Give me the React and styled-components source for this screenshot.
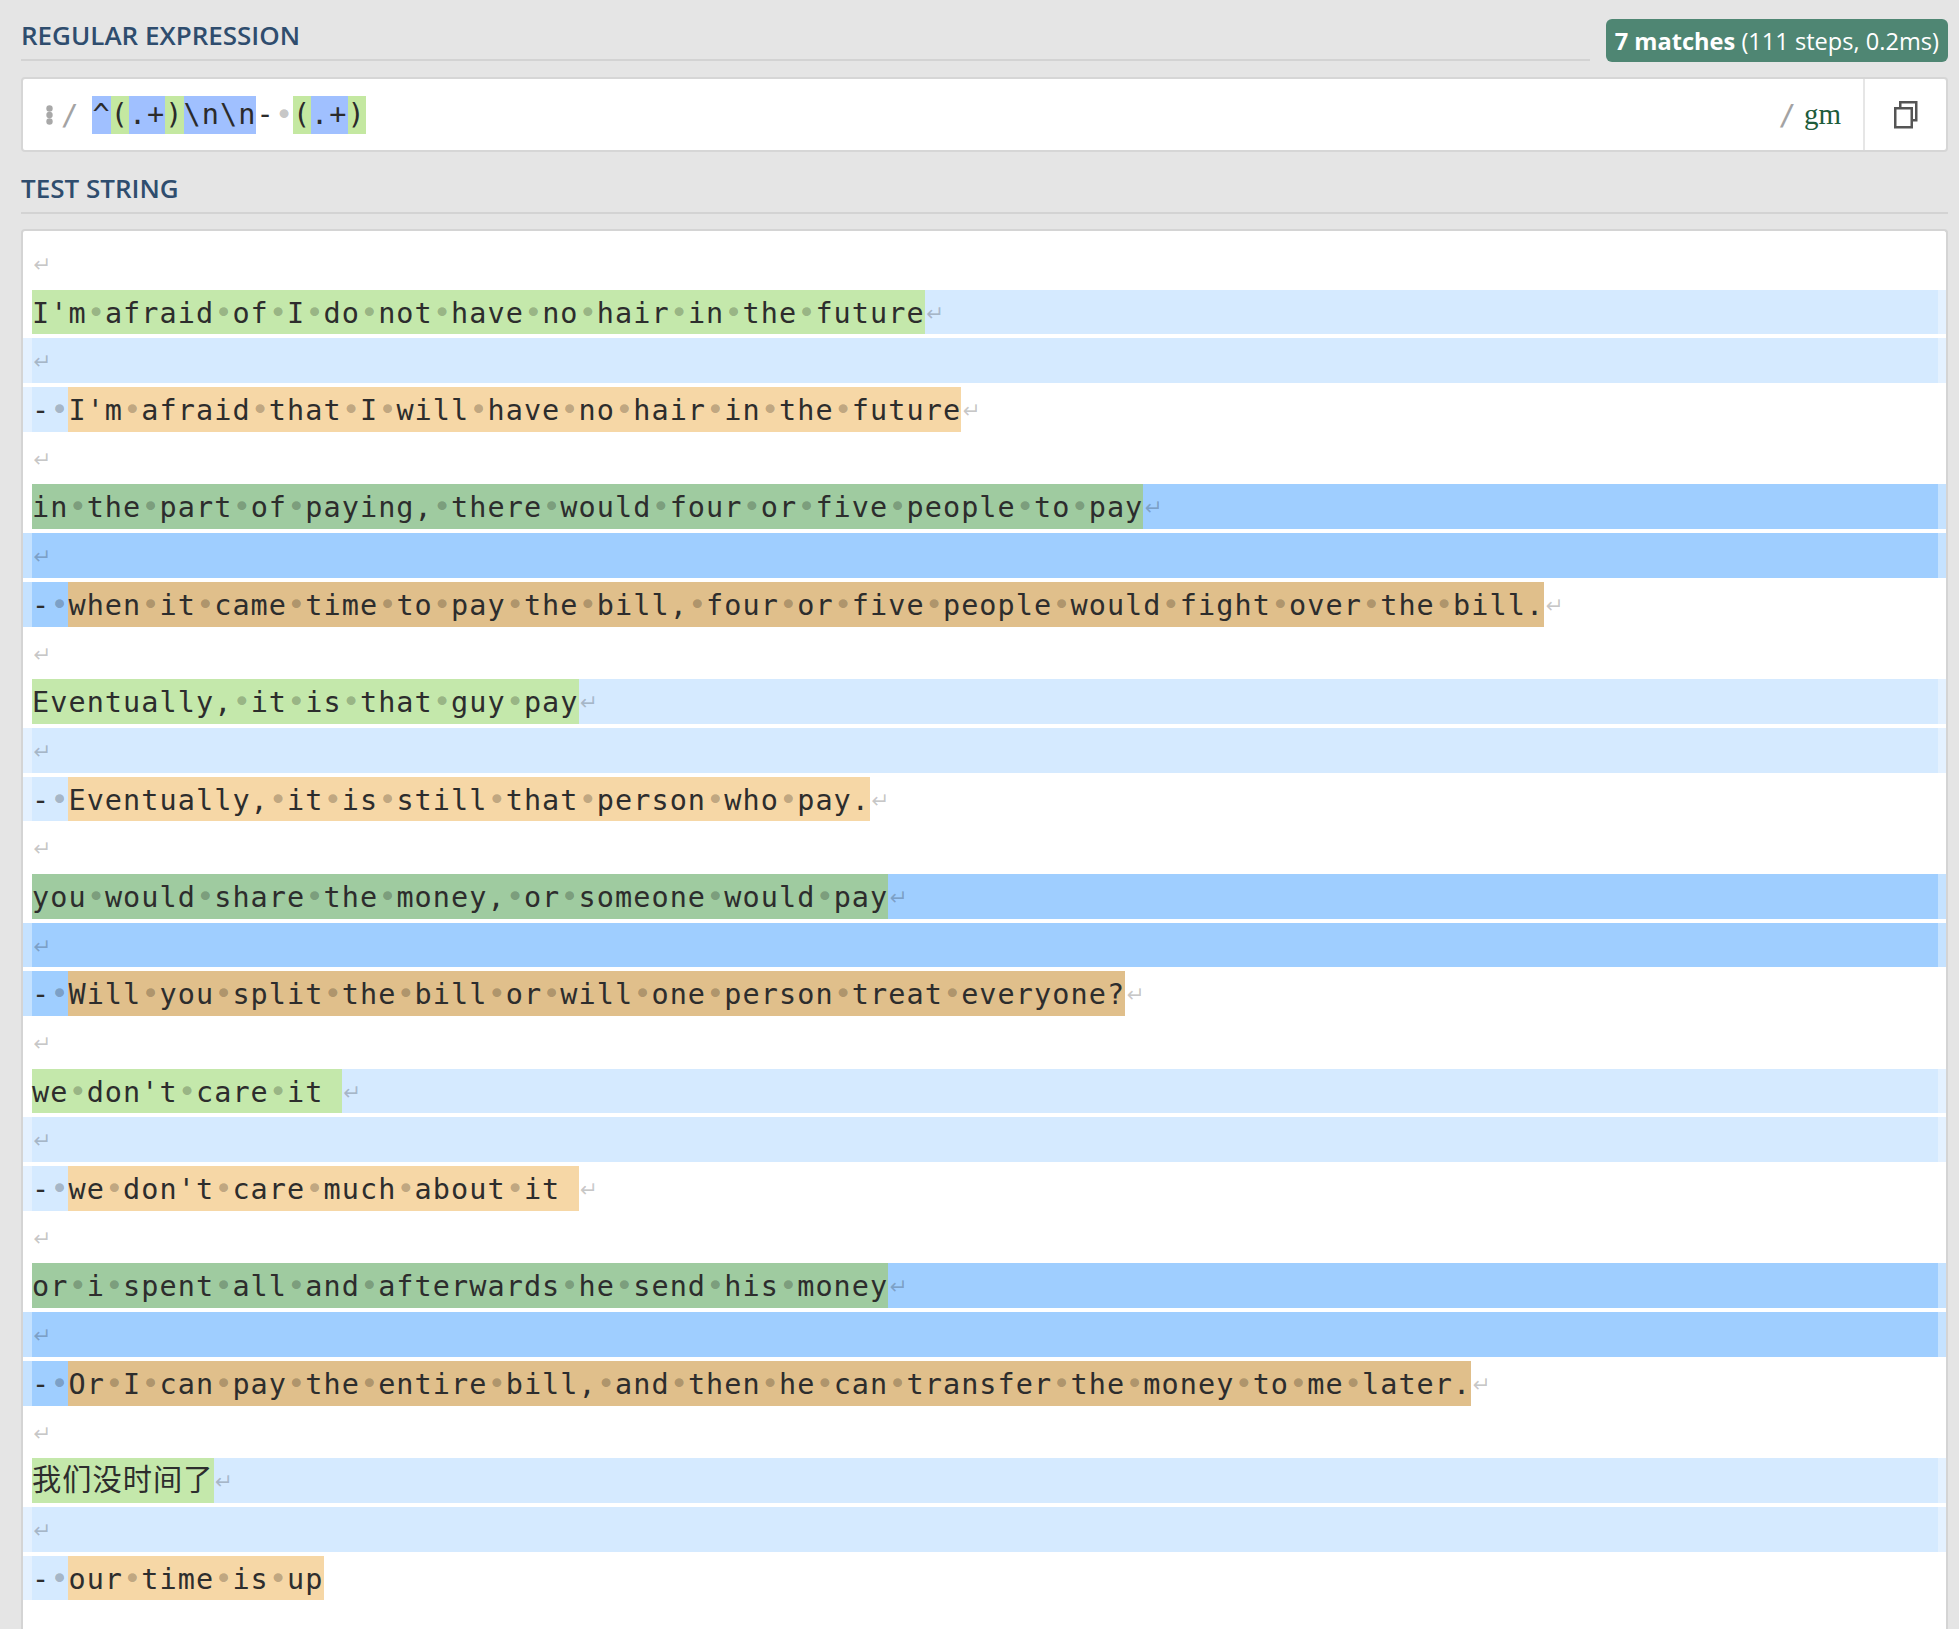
import React from 'react';
import styled, { createGlobalStyle } from 'styled-components';

const MONO = `'DejaVu Sans Mono', 'Noto Sans CJK SC', monospace`;
const SANS = `'Open Sans', 'Noto Sans', sans-serif`;
const LINE_H = 48.7;

const TONES = {
  light: { match: '#d5eaff', edge: '#e4f1ff', g1: '#c4e8ab', g2: '#f6d7a6' },
  dark: { match: '#9fceff', edge: '#c5e2ff', g1: '#9fcba0', g2: '#e0bf8b' },
};

const MATCHES = [
  ["I'm afraid of I do not have no hair in the future", "I'm afraid that I will have no hair in the future"],
  ['in the part of paying, there would four or five people to pay', 'when it came time to pay the bill, four or five people would fight over the bill.'],
  ['Eventually, it is that guy pay', 'Eventually, it is still that person who pay.'],
  ['you would share the money, or someone would pay', 'Will you split the bill or will one person treat everyone?'],
  ["we don't care it\u00a0", "we don't care much about it\u00a0"],
  ['or i spent all and afterwards he send his money', 'Or I can pay the entire bill, and then he can transfer the money to me later.'],
  ['我们没时间了', 'our time is up'],
];

const REGEX = [
  { t: '^', k: 'b' },
  { t: '(', k: 'g' },
  { t: '.+', k: 'b' },
  { t: ')', k: 'g' },
  { t: '\\n\\n', k: 'b' },
  { t: '-', k: '' },
  { t: ' ', k: '' },
  { t: '(', k: 'g' },
  { t: '.+', k: 'b' },
  { t: ')', k: 'g' },
];

// build the visible lines of the test string
const buildLines = () => {
  const lines = [{ segs: [], nl: true }];
  MATCHES.forEach(([a, b], i) => {
    const tone = i % 2 ? 'dark' : 'light';
    const last = i === MATCHES.length - 1;
    lines.push({ tone, segs: [{ text: a, kind: 'g1', cjk: /[\u4e00-\u9fff]/.test(a) }], tail: true, nl: true });
    lines.push({ tone, lead: true, segs: [], tail: true, nl: true });
    lines.push({ tone, lead: true, segs: [{ text: '- ', kind: 'match' }, { text: b, kind: 'g2' }], nl: !last });
    if (!last) lines.push({ segs: [], nl: true });
  });
  return lines;
};

const GlobalStyle = createGlobalStyle`
  html, body {
    margin: 0;
    background: #e5e5e5;
    overflow: hidden;
  }
`;

const Page = styled.div`
  padding: 17px 11px 0 21px;
  min-height: 1629px;
  box-sizing: border-box;
`;

const SectionHeader = styled.div`
  display: flex;
  align-items: center;
  gap: 16px;
  margin-top: ${(p) => p.$top || 0}px;
`;

const Title = styled.h2`
  flex: 1;
  margin: 0;
  padding-bottom: 7px;
  border-bottom: 2px solid #d3d3d3;
  font-family: ${SANS};
  font-size: 26px;
  font-weight: 600;
  line-height: 34px;
  color: #2f4d6e;
`;

const MatchBadge = styled.div`
  background: #4f8673;
  color: #fff;
  border-radius: 6px;
  padding: 0 9px;
  height: 43px;
  margin-top: 2px;
  display: flex;
  align-items: center;
  font-family: ${SANS};
  font-size: 23.6px;
  white-space: nowrap;
  b {
    font-weight: 700;
  }
`;

const RegexBox = styled.div`
  margin-top: 15px;
  height: 75px;
  box-sizing: border-box;
  background: #fff;
  border: 2px solid #d6d6d6;
  border-radius: 4px;
  display: flex;
  align-items: stretch;
`;

const RegexInput = styled.div`
  flex: 1;
  display: flex;
  align-items: center;
  padding-left: 22px;
  font-family: ${MONO};
  font-size: 28.5px;
  letter-spacing: 1.06px;
  color: #2b2b2b;
`;

const Delim = styled.span`
  font-family: ${MONO};
  font-size: 29px;
  letter-spacing: 0;
  color: #a3a3a3;
  margin: 0 ${(p) => p.$right || 0}px 0 ${(p) => p.$left || 0}px;
`;

const Token = styled.span`
  line-height: 38px;
  white-space: pre;
  background: ${(p) => (p.$kind === 'b' ? '#a0c0ff' : p.$kind === 'g' ? '#c4e8a1' : 'transparent')};
`;

const Flags = styled.div`
  display: flex;
  align-items: center;
  gap: 8px;
  padding-right: 22px;
`;

const FlagText = styled.span`
  font-family: 'Liberation Serif', serif;
  font-size: 29px;
  color: #1d5c3c;
`;

const CopyButton = styled.div`
  width: 81px;
  border-left: 2px solid #e6e6e6;
  display: flex;
  align-items: center;
  justify-content: center;
`;

const TestBox = styled.div`
  margin-top: 15px;
  background: #fff;
  border: 2px solid #d4d4d4;
  border-bottom: none;
  border-radius: 4px 4px 0 0;
  padding: 8px 0 60px;
  font-family: ${MONO};
  font-size: 28.5px;
  letter-spacing: 1.06px;
  color: #2d2d2d;
`;

const Line = styled.div`
  height: ${LINE_H}px;
  padding: 2px 0;
  box-sizing: border-box;
`;

const Strip = styled.div`
  height: 100%;
  display: flex;
  line-height: ${LINE_H - 4}px;
`;

const Pad = styled.div`
  flex: none;
  width: ${(p) => p.$w}px;
  background: ${(p) => p.$bg || 'transparent'};
`;

const Seg = styled.span`
  flex: none;
  white-space: pre;
  background: ${(p) => p.$bg || 'transparent'};
  font-size: ${(p) => (p.$cjk ? '29.2px' : 'inherit')};
`;

const Filler = styled.div`
  flex: 1;
  background: ${(p) => p.$bg || 'transparent'};
`;

const NewlineMark = styled.span`
  font-family: 'DejaVu Sans', sans-serif;
  font-size: 22px;
  letter-spacing: 0;
  color: rgba(0, 0, 0, 0.22);
  padding-left: 1px;
`;

const SpaceDot = styled.span`
  color: rgba(0, 0, 0, 0.24);
  font-size: 31px;
  letter-spacing: -0.45px;
`;

const DragDots = () => (
  <svg width="9" height="20" viewBox="0 0 9 20">
    <circle cx="4.5" cy="3.5" r="3.2" fill="#a8a8a8" />
    <circle cx="4.5" cy="10" r="3.2" fill="#a8a8a8" />
    <circle cx="4.5" cy="16.5" r="3.2" fill="#a8a8a8" />
  </svg>
);

const CopyIcon = () => (
  <svg width="24" height="28" viewBox="0 0 24 28" fill="none" stroke="#555" strokeWidth="2.5">
    <rect x="6.25" y="1.25" width="16" height="18" />
    <rect x="1.25" y="7.25" width="16.5" height="19" fill="#fff" />
  </svg>
);

const withDots = (text) =>
  text.split(/( )/).map((part, i) =>
    part === ' ' ? <SpaceDot key={i}>•</SpaceDot> : part
  );

const TestLine = ({ line }) => {
  const tone = TONES[line.tone] || {};
  return (
    <Line>
      <Strip>
        <Pad $w={9} $bg={line.lead ? tone.edge : null} />
        {line.segs.map((s, i) => (
          <Seg key={i} $bg={tone[s.kind]} $cjk={s.cjk}>
            {withDots(s.text)}
          </Seg>
        ))}
        <Filler $bg={line.tail ? tone.match : null}>
          {line.nl && <NewlineMark>↵</NewlineMark>}
        </Filler>
        <Pad $w={8} $bg={line.tail ? tone.edge : null} />
      </Strip>
    </Line>
  );
};

export default function App() {
  const lines = buildLines();
  return (
    <>
      <GlobalStyle />
      <Page>
        <SectionHeader>
          <Title>REGULAR EXPRESSION</Title>
          <MatchBadge>
            <b>7 matches</b>&nbsp;(111 steps, 0.2ms)
          </MatchBadge>
        </SectionHeader>

        <RegexBox>
          <RegexInput>
            <DragDots />
            <Delim $left={7} $right={14}>/</Delim>
            {REGEX.map((tk, i) => (
              <Token key={i} $kind={tk.k}>
                {tk.t === ' ' ? <SpaceDot>•</SpaceDot> : tk.t}
              </Token>
            ))}
          </RegexInput>
          <Flags>
            <Delim>/</Delim>
            <FlagText>gm</FlagText>
          </Flags>
          <CopyButton>
            <CopyIcon />
          </CopyButton>
        </RegexBox>

        <SectionHeader $top={19}>
          <Title>TEST STRING</Title>
        </SectionHeader>

        <TestBox>
          {lines.map((line, i) => (
            <TestLine key={i} line={line} />
          ))}
        </TestBox>
      </Page>
    </>
  );
}
